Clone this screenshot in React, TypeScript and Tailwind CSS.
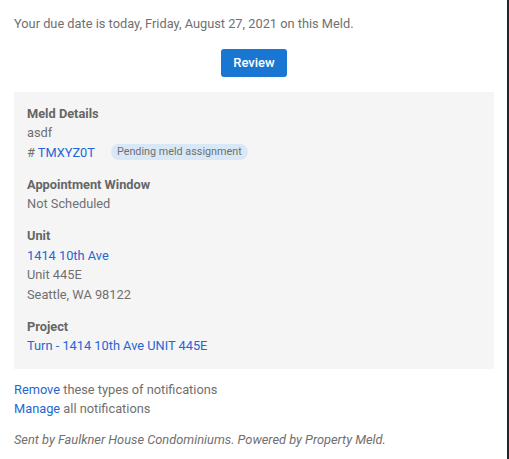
export default function App() {
  return (
    <div className="min-h-[459px] w-[509px] bg-white border-r-2 border-[#22272b] pl-[14px] pr-[13px] pt-[14px] pb-4 font-['Roboto',_'Liberation_Sans',_sans-serif] text-[12.8px] leading-[19.5px] text-[#707070]">
      <p>Your due date is today, Friday, August 27, 2021 on this Meld.</p>

      <div className="flex justify-center mt-[15px]">
        <button className="w-[66px] h-[28px] rounded-[3px] bg-[#1976d2] text-white text-[13px] font-medium">
          Review
        </button>
      </div>

      <div className="mt-[15px] bg-[#f5f5f5] px-[13px] pt-3 pb-[13px]">
        <div>
          <div className="font-bold text-[#666666]">Meld Details</div>
          <div>asdf</div>
          <div className="flex items-center gap-[16px]">
            <span>
              # <a className="text-[#2566d4]">TMXYZ0T</a>
            </span>
            <span className="h-[16px] px-[6px] rounded-full bg-[#d9e8f6] text-[10.8px] leading-[16px] text-[#707070]">
              Pending meld assignment
            </span>
          </div>
        </div>

        <div className="mt-[12.5px]">
          <div className="font-bold text-[#666666]">Appointment Window</div>
          <div>Not Scheduled</div>
        </div>

        <div className="mt-[12.5px]">
          <div className="font-bold text-[#666666]">Unit</div>
          <div className="text-[#2566d4]">1414 10th Ave</div>
          <div>Unit 445E</div>
          <div>Seattle, WA 98122</div>
        </div>

        <div className="mt-[12.5px]">
          <div className="font-bold text-[#666666]">Project</div>
          <div className="text-[#2566d4]">Turn - 1414 10th Ave UNIT 445E</div>
        </div>
      </div>

      <div className="mt-[11px]">
        <div>
          <a className="text-[#2566d4]">Remove</a> these types of notifications
        </div>
        <div>
          <a className="text-[#2566d4]">Manage</a> all notifications
        </div>
      </div>

      <p className="mt-[11.5px] italic">
        Sent by Faulkner House Condominiums. Powered by Property Meld.
      </p>
    </div>
  );
}
